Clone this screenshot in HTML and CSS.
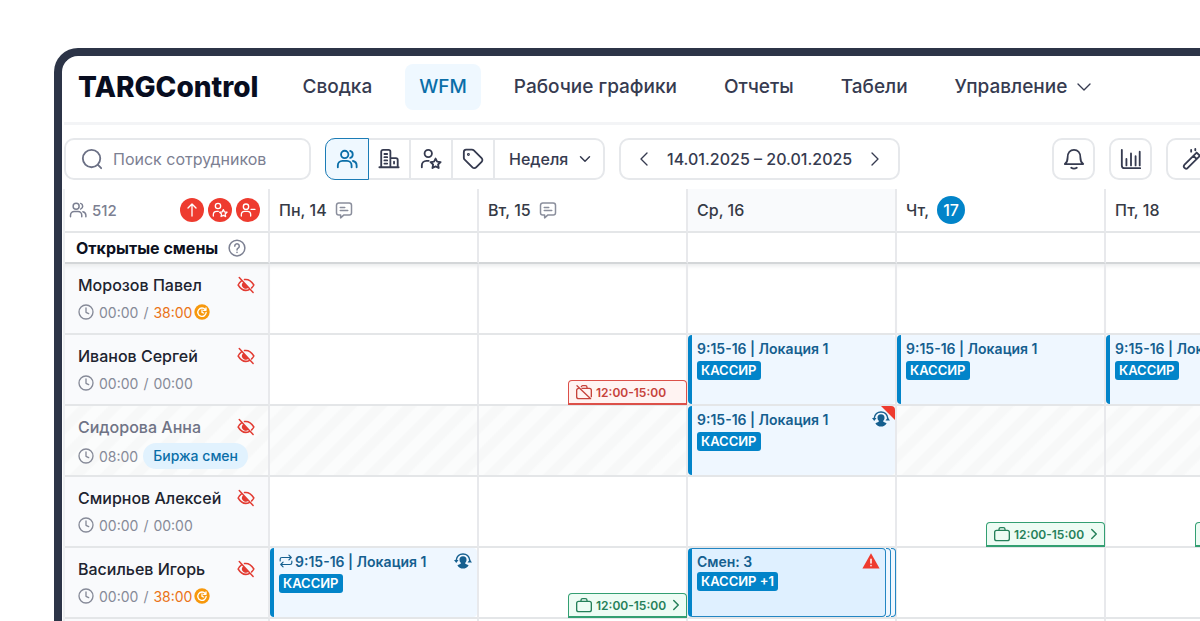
FILE: index.html
```
<!DOCTYPE html>
<html lang="ru">
<head>
    <meta charset="UTF-8">
    <meta name="viewport" content="width=device-width, initial-scale=1.0">
    <title>TARGControl</title>
    <link rel="stylesheet" href="styles.css">
</head>
<body>
    <!-- Icons used on the page -->
    <svg class="sprite" aria-hidden="true">
        <symbol id="users" viewBox="0 0 24 24"><circle cx="9.5" cy="7" r="4"/><path d="M2 21v-2a5 5 0 0 1 5-5h5a5 5 0 0 1 5 5v2M15.500 3.200a4 4 0 0 1 0 7.600M18.500 14.200a5 5 0 0 1 4 4.800v2"/></symbol>
        <symbol id="building" viewBox="0 0 24 24"><path d="M1.500 21h21M3.500 21V4a2 2 0 0 1 2-2h6a2 2 0 0 1 2 2v17M13.500 11h6a2 2 0 0 1 2 2v8M7 6.500h3M7 10h3M7 13.500h3M7 17h3M17.500 15v2"/></symbol>
        <symbol id="user-star" viewBox="0 0 24 24"><circle cx="9" cy="6" r="4"/><path d="M2 21v-2a5 5 0 0 1 5-5h2.500"/><path d="M17 11.500l1.700 3.400 3.800.500-2.800 2.600.700 3.800-3.400-1.800-3.400 1.800.700-3.800-2.800-2.600 3.800-.5z"/></symbol>
        <symbol id="user-minus" viewBox="0 0 24 24"><circle cx="9" cy="7" r="4"/><path d="M2 21v-2a5 5 0 0 1 5-5h4a5 5 0 0 1 5 5v2M16.500 11h6"/></symbol>
        <symbol id="tag" viewBox="0 0 24 24"><path d="M2 4.500v6a3 3 0 0 0 .900 2.100l8.500 8.500a2.800 2.800 0 0 0 4 0l6-6a2.800 2.800 0 0 0 0-4L12.900 2.600a3 3 0 0 0-2.100-.900H4.500A2.700 2.700 0 0 0 2 4.500z"/><circle cx="7" cy="7" r=".6"/></symbol>
        <symbol id="search" viewBox="0 0 24 24"><circle cx="11.500" cy="11.500" r="9.500"/><path d="M18.500 18.500L22 22"/></symbol>
        <symbol id="down" viewBox="0 0 24 24"><path d="M3 7.500l9 9 9-9"/></symbol>
        <symbol id="left" viewBox="0 0 24 24"><path d="M16.500 3l-9 9 9 9"/></symbol>
        <symbol id="right" viewBox="0 0 24 24"><path d="M7.500 3l9 9-9 9"/></symbol>
        <symbol id="up" viewBox="0 0 24 24"><path d="M12 21V3M6 9l6-6 6 6"/></symbol>
        <symbol id="bell" viewBox="0 0 24 24"><path d="M2 17.500c2-1.500 3-3.500 3-7C5 5 8 2 12 2s7 3 7 8.500c0 3.500 1 5.500 3 7zM9 21.500c1.800 1.200 4.200 1.200 6 0"/></symbol>
        <symbol id="chart" viewBox="0 0 24 24"><path d="M2 2v17a3 3 0 0 0 3 3h17M7 19v-7M12 19V6M17 19V9M21.500 19V4"/></symbol>
        <symbol id="wand" viewBox="0 0 24 24"><path d="M2.500 18.500L16 5l3.500 3.500L6 22a2.500 2.500 0 0 1-3.500-3.500zM12.500 8.500L16 12M10 2v2M14.500 1v1.500M21 14v2"/></symbol>
        <symbol id="note" viewBox="0 0 24 24"><path d="M5 2.500h14a3 3 0 0 1 3 3v10a3 3 0 0 1-3 3h-7L7.500 22.500v-4H5a3 3 0 0 1-3-3v-10a3 3 0 0 1 3-3zM7 8.500h6M7 12.500h10"/></symbol>
        <symbol id="help" viewBox="0 0 24 24"><circle cx="12" cy="12" r="10.500"/><path d="M9 9.500a3 3 0 1 1 4.500 2.600c-1 .6-1.500 1.200-1.500 2.400M12 17.500v.4"/></symbol>
        <symbol id="clock" viewBox="0 0 24 24"><circle cx="12" cy="12" r="10.500"/><path d="M12 6v6.500l4 2"/></symbol>
        <symbol id="eye-off" viewBox="0 0 24 24"><path d="M3 2l18.500 20M10 4.800c5-.9 9 1.700 12.500 7.200-.9 1.600-1.900 2.900-3 3.900M16 18.300C10.500 20.500 5.500 18.500 1.500 12c1.200-2.200 2.600-3.900 4.200-5.200M9 9a4 4 0 0 0 5.500 6"/><path class="fill" d="M9 9a4 4 0 0 0 5.500 6z"/></symbol>
        <symbol id="overtime" viewBox="0 0 24 24"><circle class="fill" cx="12" cy="12" r="11.500"/><g class="light"><path d="M17 8.500a6.300 6.300 0 1 0 1.300 4M18 6v3.500h-3.500M12 9v3.500l2.500 1"/></g></symbol>
        <symbol id="repeat" viewBox="0 0 24 24"><path d="M2 12V9a3 3 0 0 1 3-3h16M17 2l4 4-4 4M22 12v3a3 3 0 0 1-3 3H3M7 14l-4 4 4 4"/></symbol>
        <symbol id="swap" viewBox="0 0 24 24"><path d="M3 11C3.500 5.500 7.500 2.500 12 2.500S20.500 5.500 21 11"/><path class="fill" d="M0 10.500h6L3 14.500zM18 14h6l-3-4zM12 5.500a4.700 4.700 0 0 1 4.700 4.700c0 1.800-.7 3.200-1.700 4.200v1.400l4.500 1.700C18 20.500 15 22 12 22s-6-1.500-7.500-4.500L9 15.800v-1.400a5.600 5.600 0 0 1-1.700-4.200A4.700 4.700 0 0 1 12 5.500z"/></symbol>
        <symbol id="alert" viewBox="0 0 24 24"><path class="fill" d="M12 1.500L23.500 22H.5z"/><g class="light"><path d="M12 9.500v5M12 18v.3"/></g></symbol>
        <symbol id="case" viewBox="0 0 24 24"><rect x="1" y="6.500" width="22" height="15.500" rx="3"/><path d="M7.500 6.500V5A2.500 2.500 0 0 1 10 2.500h4A2.500 2.500 0 0 1 16.500 5v1.500"/></symbol>
        <symbol id="case-off" viewBox="0 0 24 24"><path d="M9 6.500h11a3 3 0 0 1 3 3V19M20 22H4a3 3 0 0 1-3-3V9.500a3 3 0 0 1 3-3M8 4a2.500 2.500 0 0 1 2-1.500h4A2.500 2.500 0 0 1 16.500 5v1.500M1.500 2.500L22 22"/></symbol>
    </svg>

    <div class="window">
        <header class="header">
            <a class="logo" href="#">TARGControl</a>
            <nav class="nav">
                <a href="#">Сводка</a>
                <a class="active" href="#">WFM</a>
                <a href="#">Рабочие графики</a>
                <a href="#">Отчеты</a>
                <a href="#">Табели</a>
                <a href="#">Управление <svg class="icon small"><use href="#down"/></svg></a>
            </nav>
        </header>

        <div class="toolbar">
            <label class="search">
                <svg class="icon"><use href="#search"/></svg>
                <input type="text" placeholder="Поиск сотрудников" aria-label="Поиск сотрудников">
            </label>

            <div class="group">
                <button class="active" aria-label="Сотрудники"><svg class="icon large"><use href="#users"/></svg></button>
                <button aria-label="Локации"><svg class="icon large"><use href="#building"/></svg></button>
                <button aria-label="Должности"><svg class="icon large"><use href="#user-star"/></svg></button>
                <button aria-label="Теги"><svg class="icon large"><use href="#tag"/></svg></button>
                <label class="period">
                    <select aria-label="Период">
                        <option>Неделя</option>
                    </select>
                    <svg class="icon tiny"><use href="#down"/></svg>
                </label>
            </div>

            <div class="dates">
                <button aria-label="Назад"><svg class="icon small"><use href="#left"/></svg></button>
                <span>14.01.2025 – 20.01.2025</span>
                <button aria-label="Вперед"><svg class="icon small"><use href="#right"/></svg></button>
            </div>

            <div class="tools">
                <button aria-label="Уведомления"><svg class="icon large"><use href="#bell"/></svg></button>
                <button aria-label="Статистика"><svg class="icon large"><use href="#chart"/></svg></button>
                <button class="wide" aria-label="Автозаполнение"><svg class="icon large"><use href="#wand"/></svg></button>
            </div>
        </div>

        <table class="schedule">
            <colgroup>
                <col class="col-person">
                <col class="col-day" span="5">
            </colgroup>
            <thead>
                <tr class="days">
                    <th>
                        <div class="summary">
                            <svg class="icon"><use href="#users"/></svg>
                            <span>512</span>
                            <div class="filters">
                                <button aria-label="Смены"><svg class="icon"><use href="#up"/></svg></button>
                                <button aria-label="Должности"><svg class="icon"><use href="#user-star"/></svg></button>
                                <button aria-label="Без смен"><svg class="icon"><use href="#user-minus"/></svg></button>
                            </div>
                        </div>
                    </th>
                    <th><div class="day">Пн, 14 <svg class="icon"><use href="#note"/></svg></div></th>
                    <th><div class="day">Вт, 15 <svg class="icon"><use href="#note"/></svg></div></th>
                    <th class="tinted"><div class="day">Ср, 16</div></th>
                    <th><div class="day">Чт, <span class="today">17</span></div></th>
                    <th><div class="day">Пт, 18</div></th>
                </tr>
                <tr class="open">
                    <th><div class="open-title">Открытые смены <svg class="icon"><use href="#help"/></svg></div></th>
                    <td></td>
                    <td></td>
                    <td></td>
                    <td></td>
                    <td></td>
                </tr>
            </thead>
            <tbody>
                <tr>
                    <th>
                        <div class="name">Морозов Павел <svg class="icon eye"><use href="#eye-off"/></svg></div>
                        <div class="hours"><svg class="icon"><use href="#clock"/></svg> 00:00 <span>/</span> <span class="over">38:00</span><svg class="icon coin"><use href="#overtime"/></svg></div>
                    </th>
                    <td></td>
                    <td></td>
                    <td></td>
                    <td></td>
                    <td></td>
                </tr>
                <tr>
                    <th>
                        <div class="name">Иванов Сергей <svg class="icon eye"><use href="#eye-off"/></svg></div>
                        <div class="hours"><svg class="icon"><use href="#clock"/></svg> 00:00 <span>/</span> <span>00:00</span></div>
                    </th>
                    <td></td>
                    <td class="bottom">
                        <div class="chip busy"><svg class="icon"><use href="#case-off"/></svg> 12:00-15:00</div>
                    </td>
                    <td>
                        <div class="shift">
                            <div class="shift-title">9:15-16 | Локация 1</div>
                            <span class="badge">КАССИР</span>
                        </div>
                    </td>
                    <td>
                        <div class="shift">
                            <div class="shift-title">9:15-16 | Локация 1</div>
                            <span class="badge">КАССИР</span>
                        </div>
                    </td>
                    <td>
                        <div class="shift">
                            <div class="shift-title">9:15-16 | Локация 1</div>
                            <span class="badge">КАССИР</span>
                        </div>
                    </td>
                </tr>
                <tr class="away">
                    <th>
                        <div class="name">Сидорова Анна <svg class="icon eye"><use href="#eye-off"/></svg></div>
                        <div class="hours"><svg class="icon"><use href="#clock"/></svg> 08:00 <span class="pill">Биржа смен</span></div>
                    </th>
                    <td></td>
                    <td></td>
                    <td>
                        <div class="shift flagged">
                            <div class="shift-title">9:15-16 | Локация 1 <svg class="icon mark"><use href="#swap"/></svg></div>
                            <span class="badge">КАССИР</span>
                        </div>
                    </td>
                    <td></td>
                    <td></td>
                </tr>
                <tr>
                    <th>
                        <div class="name">Смирнов Алексей <svg class="icon eye"><use href="#eye-off"/></svg></div>
                        <div class="hours"><svg class="icon"><use href="#clock"/></svg> 00:00 <span>/</span> <span>00:00</span></div>
                    </th>
                    <td></td>
                    <td></td>
                    <td></td>
                    <td class="bottom">
                        <button class="chip free"><svg class="icon"><use href="#case"/></svg> 12:00-15:00 <svg class="icon arrow"><use href="#right"/></svg></button>
                    </td>
                    <td class="bottom">
                        <button class="chip free" aria-label="Доступность"></button>
                    </td>
                </tr>
                <tr>
                    <th>
                        <div class="name">Васильев Игорь <svg class="icon eye"><use href="#eye-off"/></svg></div>
                        <div class="hours"><svg class="icon"><use href="#clock"/></svg> 00:00 <span>/</span> <span class="over">38:00</span><svg class="icon coin"><use href="#overtime"/></svg></div>
                    </th>
                    <td>
                        <div class="shift">
                            <div class="shift-title"><svg class="icon repeat"><use href="#repeat"/></svg>9:15-16 | Локация 1 <svg class="icon mark"><use href="#swap"/></svg></div>
                            <span class="badge">КАССИР</span>
                        </div>
                    </td>
                    <td class="bottom">
                        <button class="chip free"><svg class="icon"><use href="#case"/></svg> 12:00-15:00 <svg class="icon arrow"><use href="#right"/></svg></button>
                    </td>
                    <td>
                        <div class="stack">
                            <div class="shift">
                                <div class="shift-title">Смен: 3 <svg class="icon mark alert"><use href="#alert"/></svg></div>
                                <span class="badge">КАССИР +1</span>
                            </div>
                            <div class="stack-edge"></div>
                            <div class="stack-edge"></div>
                        </div>
                    </td>
                    <td></td>
                    <td></td>
                </tr>
                <tr>
                    <th></th>
                    <td></td>
                    <td></td>
                    <td></td>
                    <td></td>
                    <td></td>
                </tr>
            </tbody>
        </table>
    </div>
</body>
</html>
```
FILE: styles.css
```
* {
    box-sizing: border-box;
}

body {
    margin: 0;
    height: 100vh;
    padding: 48px 0 0 54px;
    overflow: hidden;
    background-color: #fff;
    color: #20232f;
    font-family: Inter, "Noto Sans", sans-serif;
    font-size: 16px;
}

button, input, select {
    font: inherit;
    color: inherit;
}

button {
    display: flex;
    align-items: center;
    justify-content: center;
    padding: 0;
    border: 0;
    background: none;
    cursor: pointer;
}

a {
    color: inherit;
    text-decoration: none;
}

/* Icons */
.sprite {
    display: none;
}

.icon {
    width: 18px;
    height: 18px;
    flex-shrink: 0;
    fill: none;
    stroke: currentColor;
    stroke-width: 2;
    stroke-linecap: round;
    stroke-linejoin: round;
}

.icon.large {
    width: 22px;
    height: 22px;
}

.icon.small {
    width: 16px;
    height: 16px;
}

.icon.tiny {
    width: 12px;
    height: 12px;
    stroke-width: 3;
}

.fill {
    fill: currentColor;
    stroke: none;
}

.light {
    stroke: #fff;
}

/* Window frame, runs off the right and bottom edges */
.window {
    height: 100%;
    overflow: hidden;
    border: 8px solid #2c3447;
    border-right: 0;
    border-bottom: 0;
    border-radius: 24px 0 0 0;
    background-color: #fff;
}

/* Header */
.header {
    display: flex;
    align-items: center;
    gap: 30px;
    height: 69px;
    margin-left: 2px;
    padding: 0 0 5px 14px;
    border-bottom: 3px solid #f3f4f6;
}

.logo {
    color: #080d1f;
    font-size: 28px;
    font-weight: 800;
}

.nav {
    display: flex;
    gap: 19px;
    color: #363b50;
    font-size: 19px;
    font-weight: 500;
    white-space: nowrap;
}

.nav a {
    display: flex;
    align-items: center;
    gap: 9px;
    height: 46px;
    padding: 0 14px;
    border-radius: 8px;
}

.nav .active {
    background-color: #eff8ff;
    color: #0a6ea8;
}

/* Toolbar */
.toolbar {
    display: flex;
    gap: 14px;
    padding: 13px 0 9px 2px;
    color: #363b50;
    font-weight: 500;
    white-space: nowrap;
}

.search, .group, .dates, .tools button {
    height: 42px;
    border: 2px solid #e6e8eb;
    border-radius: 10px;
    background-color: #fff;
}

.search {
    display: flex;
    align-items: center;
    gap: 10px;
    width: 247px;
    padding: 0 15px;
    color: #6b7085;
}

.search .icon {
    width: 22px;
    height: 22px;
}

.search input {
    min-width: 0;
    flex: 1;
    padding: 0;
    border: 0;
    outline: 0;
    font-weight: 400;
}

.search input::placeholder {
    color: #7c8092;
}

.group {
    display: flex;
}

.group button {
    width: 42px;
    border-right: 2px solid #e6e8eb;
}

.group .active {
    width: 44px;
    margin: -2px 0 -2px -2px;
    border: 1px solid #1b7cb6;
    border-radius: 10px 0 0 10px;
    background-color: #eff8ff;
    color: #0a6ea8;
}

.period {
    display: flex;
    align-items: center;
    gap: 10px;
    padding: 0 12px 0 14px;
}

.period select {
    padding: 0;
    border: 0;
    outline: 0;
    appearance: none;
    background: none;
}

.dates {
    display: flex;
    align-items: center;
    gap: 15px;
    padding: 0 15px;
}

.tools {
    display: flex;
    gap: 14px;
    margin-left: auto;
    margin-right: -20px;
}

.tools button {
    width: 43px;
}

.tools .wide {
    width: 54px;
    justify-content: flex-start;
    padding-left: 14px;
}

/* Schedule */
.schedule {
    width: 1252px;
    margin-left: 1px;
    table-layout: fixed;
    border-collapse: separate;
    border-spacing: 0;
    border-left: 2px solid #eef0f2;
}

.col-person {
    width: 205px;
}

.col-day {
    width: 209px;
}

.schedule th, .schedule td {
    height: 71px;
    padding: 0;
    border-right: 2px solid #e8e9ec;
    border-bottom: 2px solid #e4e6e8;
    font-weight: 500;
    text-align: left;
    vertical-align: top;
}

.schedule .days th {
    height: 44px;
    vertical-align: middle;
}

.schedule .open th, .schedule .open td {
    height: 31px;
    border-bottom: 2px solid #d3d6d8;
    vertical-align: middle;
}

.schedule .bottom {
    vertical-align: bottom;
}

.schedule .tinted {
    background-color: #f9fafc;
}

.schedule tbody th {
    padding: 11px 13px 0 13px;
    background-color: #f9fafc;
}

.schedule tbody tr:first-child > * {
    box-shadow: inset 0 5px 4px -3px #e8eaeb;
}

.summary {
    display: flex;
    align-items: center;
    gap: 5px;
    padding: 0 8px 0 4px;
    color: #7c8092;
    font-size: 15px;
}

.filters {
    display: flex;
    gap: 4px;
    margin-left: auto;
}

.filters button {
    width: 24px;
    height: 24px;
    border-radius: 50%;
    background-color: #ee3b2f;
    color: #fff;
}

.filters .icon {
    width: 16px;
    height: 16px;
}

.day {
    display: flex;
    align-items: center;
    gap: 8px;
    padding-left: 9px;
    color: #363a46;
}

.day .icon {
    color: #8a8e9c;
}

.today {
    width: 28px;
    border-radius: 50%;
    background-color: #0284c9;
    color: #fff;
    line-height: 28px;
    text-align: center;
}

.open-title {
    display: flex;
    align-items: center;
    gap: 10px;
    padding-left: 11px;
    color: #0c1020;
    font-weight: 700;
}

.open-title .icon {
    color: #7c8092;
}

/* Person cell */
.name {
    display: flex;
    align-items: center;
    justify-content: space-between;
    line-height: 20px;
    white-space: nowrap;
}

.eye {
    color: #e23b32;
}

.hours {
    display: flex;
    align-items: center;
    gap: 5px;
    min-height: 22px;
    margin-top: 6px;
    color: #868a98;
    font-size: 14px;
    font-weight: 400;
}

.hours .icon {
    width: 16px;
    height: 16px;
}

.over {
    color: #ea7317;
}

.hours .coin {
    margin-left: -3px;
    color: #f7980c;
}

.pill {
    padding: 0 10px;
    border-radius: 13px;
    background-color: #e1f2fe;
    color: #0a6ea8;
    font-weight: 500;
    line-height: 26px;
}

/* Person is away, the whole row is hatched */
.schedule .away th, .schedule .away td {
    background-image: repeating-linear-gradient(135deg, #fbfcfc 0, #fbfcfc 9px, #f7f8f8 11px, #f7f8f8 19px, #fbfcfc 21px);
}

.away .name {
    color: #6f7385;
}

.away .eye {
    color: #e23b32;
}

/* Shifts */
.shift {
    position: relative;
    height: 69px;
    padding: 4px 5px;
    border-left: 4px solid #0284c9;
    border-radius: 4px;
    background-color: #eff7ff;
    color: #155f8f;
    font-size: 14px;
    font-weight: 600;
}

.shift-title {
    display: flex;
    align-items: center;
    height: 18px;
    white-space: nowrap;
}

.badge {
    display: inline-block;
    margin-top: 4px;
    padding: 0 4px;
    border-radius: 3px;
    background-color: #0284c9;
    color: #fff;
    font-size: 13px;
    line-height: 19px;
}

.mark {
    margin-left: auto;
}

.alert {
    color: #ee3b2f;
}

.repeat {
    width: 14px;
    height: 14px;
    margin-right: 2px;
}

/* Red corner */
.flagged::after {
    content: "";
    position: absolute;
    top: 0;
    right: 0;
    width: 14px;
    height: 14px;
    border-radius: 0 4px 0 0;
    background-color: #ee3b2f;
    clip-path: polygon(0 0, 100% 0, 100% 100%);
}

/* Several shifts on one day */
.stack {
    display: flex;
    margin-right: -1px;
}

.stack .shift {
    flex: 1;
    padding-top: 3px;
    border: 1px solid #2386c3;
    border-left: 4px solid #0284c9;
    background-color: #dff0ff;
}

.stack .badge {
    margin-top: 2px;
}

.stack-edge {
    width: 5px;
    border: 1px solid #2386c3;
    border-left: 0;
    border-radius: 0 4px 4px 0;
    background-color: #eff7ff;
}

/* Availability */
.chip {
    display: flex;
    align-items: center;
    justify-content: flex-start;
    gap: 4px;
    width: 119px;
    height: 25px;
    margin: 0 -1px -1px auto;
    padding: 0 5px 0 7px;
    border: 1px solid;
    border-bottom-width: 2px;
    border-radius: 4px 4px 0 0;
    font-size: 12px;
    font-weight: 600;
    white-space: nowrap;
}

.chip .icon {
    width: 16px;
    height: 16px;
}

.chip .arrow {
    width: 12px;
    height: 12px;
    stroke-width: 3;
}

.busy {
    border-color: #dc5049;
    background-color: #fff3f2;
    color: #c6423b;
}

.free {
    border-color: #339f72;
    background-color: #edfcf4;
    color: #25805a;
}
```
